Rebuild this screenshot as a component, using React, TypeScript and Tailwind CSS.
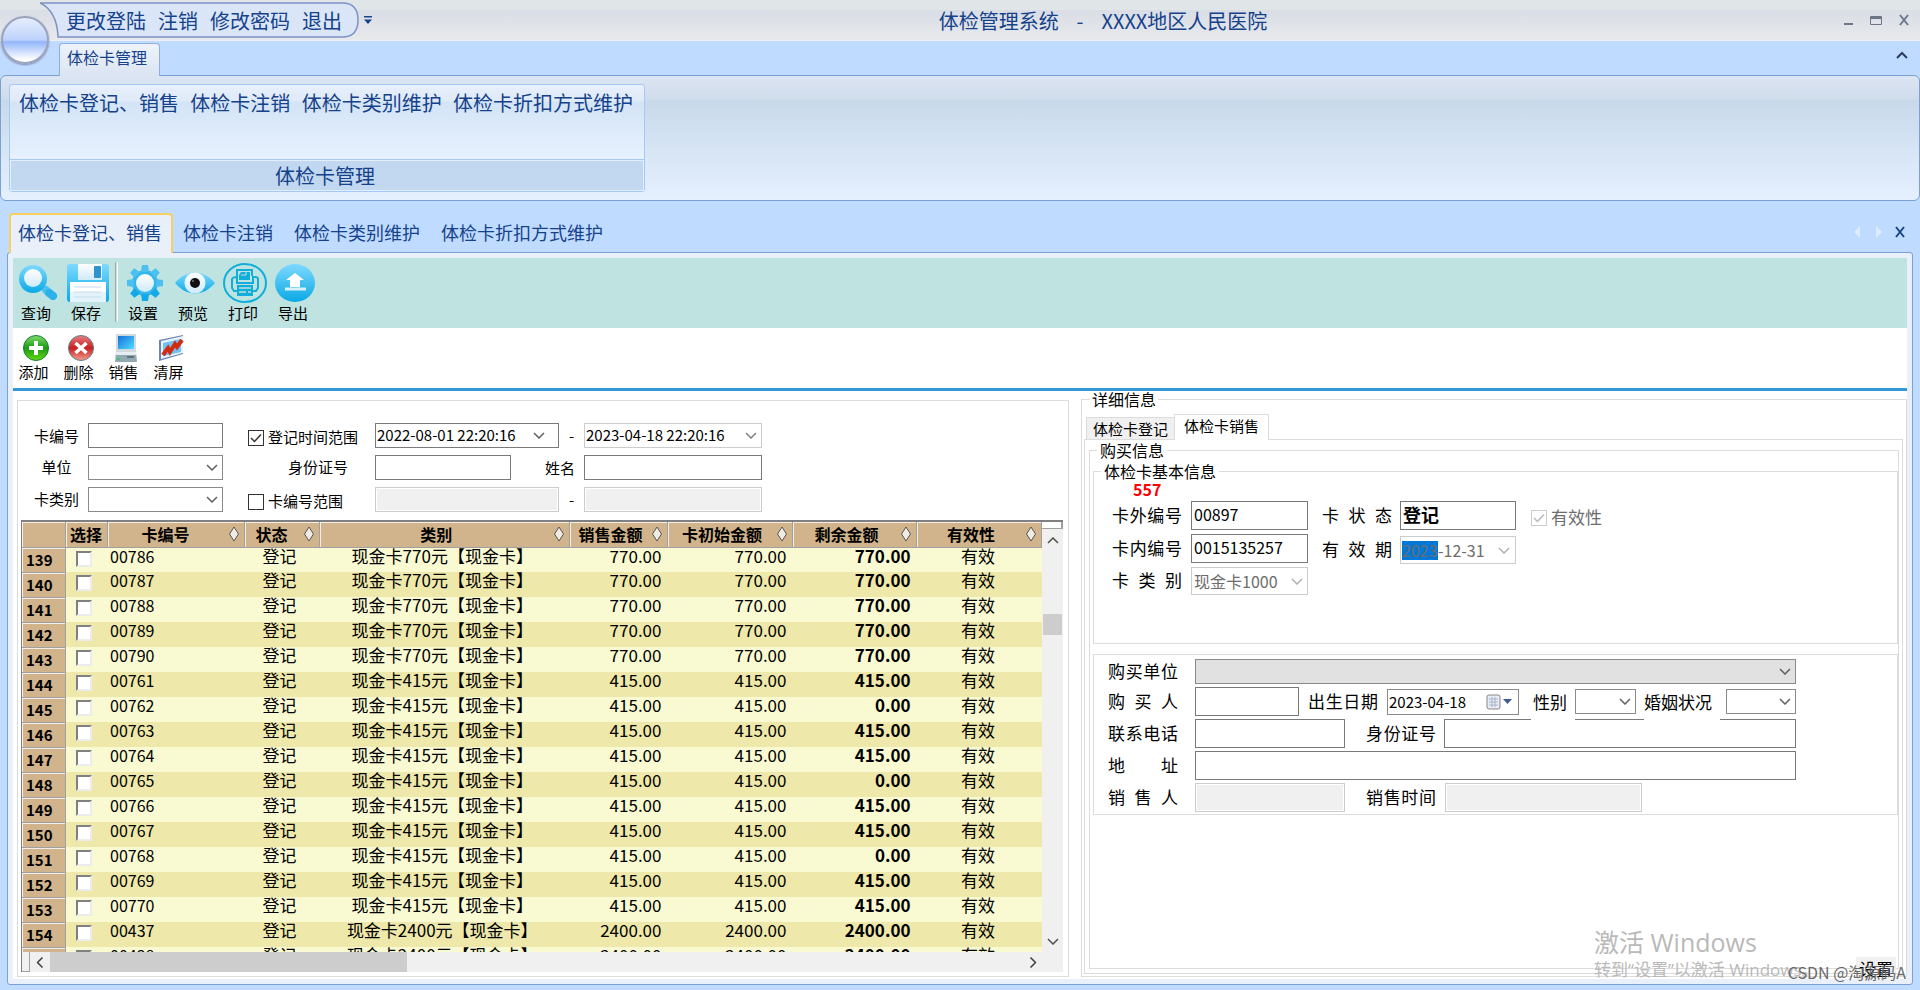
import type { ReactNode } from "react";
import clsx from "clsx";

const ribbonItems = ["体检卡登记、销售", "体检卡注销", "体检卡类别维护", "体检卡折扣方式维护"];
const quickItems = ["更改登陆", "注销", "修改密码", "退出"];

type Row = { no: number; card: string; kind: string; sale: string; left: string };

const k770 = "现金卡770元【现金卡】";
const k415 = "现金卡415元【现金卡】";
const k2400 = "现金卡2400元【现金卡】";

const rows: Row[] = [
  { no: 139, card: "00786", kind: k770, sale: "770.00", left: "770.00" },
  { no: 140, card: "00787", kind: k770, sale: "770.00", left: "770.00" },
  { no: 141, card: "00788", kind: k770, sale: "770.00", left: "770.00" },
  { no: 142, card: "00789", kind: k770, sale: "770.00", left: "770.00" },
  { no: 143, card: "00790", kind: k770, sale: "770.00", left: "770.00" },
  { no: 144, card: "00761", kind: k415, sale: "415.00", left: "415.00" },
  { no: 145, card: "00762", kind: k415, sale: "415.00", left: "0.00" },
  { no: 146, card: "00763", kind: k415, sale: "415.00", left: "415.00" },
  { no: 147, card: "00764", kind: k415, sale: "415.00", left: "415.00" },
  { no: 148, card: "00765", kind: k415, sale: "415.00", left: "0.00" },
  { no: 149, card: "00766", kind: k415, sale: "415.00", left: "415.00" },
  { no: 150, card: "00767", kind: k415, sale: "415.00", left: "415.00" },
  { no: 151, card: "00768", kind: k415, sale: "415.00", left: "0.00" },
  { no: 152, card: "00769", kind: k415, sale: "415.00", left: "415.00" },
  { no: 153, card: "00770", kind: k415, sale: "415.00", left: "415.00" },
  { no: 154, card: "00437", kind: k2400, sale: "2400.00", left: "2400.00" },
  { no: 155, card: "00438", kind: k2400, sale: "2400.00", left: "2400.00" },
];

const columns = [
  { title: "", width: "w-[43px]", sort: false },
  { title: "选择", width: "w-[42px]", sort: false },
  { title: "卡编号", width: "w-[137px]", sort: true },
  { title: "状态", width: "w-[75px]", sort: true },
  { title: "类别", width: "", sort: true },
  { title: "销售金额", width: "w-[98px]", sort: true },
  { title: "卡初始金额", width: "w-[125px]", sort: true },
  { title: "剩余金额", width: "w-[124px]", sort: true },
  { title: "有效性", width: "w-[125px]", sort: true },
];

function Chevron({ className = "text-[#606060]", flip = false }: { className?: string; flip?: boolean }) {
  return (
    <svg
      viewBox="0 0 12 7"
      className={clsx("pointer-events-none h-[7px] w-3", flip && "rotate-180", className)}
      fill="none"
      stroke="currentColor"
      strokeWidth="1.5"
      aria-hidden
    >
      <path d="M1 1l5 5 5-5" />
    </svg>
  );
}

function SelectBox({
  label,
  className,
  value = "",
  disabled = false,
}: {
  label: string;
  className?: string;
  value?: string;
  disabled?: boolean;
}) {
  return (
    <div
      className={clsx(
        "relative flex items-center border px-[2px]",
        disabled ? "border-[#cccccc] text-[#6d6d6d]" : "border-[#8a8a8a]",
        className
      )}
    >
      <select
        aria-label={label}
        disabled={disabled}
        className="h-full w-full appearance-none bg-transparent pr-5 text-base leading-5 opacity-100"
      >
        <option>{value}</option>
      </select>
      <Chevron className={clsx("absolute right-1", disabled ? "text-[#b0b0b0]" : "text-[#606060]")} />
    </div>
  );
}

function TextBox({
  label,
  className,
  value = "",
  disabled = false,
}: {
  label: string;
  className?: string;
  value?: string;
  disabled?: boolean;
}) {
  return (
    <input
      type="text"
      aria-label={label}
      defaultValue={value}
      disabled={disabled}
      className={clsx(
        "border px-[2px] pb-1 text-base leading-5",
        disabled ? "border-[#cccccc] bg-[#f0f0f0] shadow-[inset_0_0_0_1px_#fff]" : "border-[#7a7a7a] bg-white",
        className
      )}
    />
  );
}

function CheckBox({ id, checked = false, disabled = false }: { id: string; checked?: boolean; disabled?: boolean }) {
  return (
    <span className="relative flex h-4 w-4 shrink-0">
      <input
        id={id}
        type="checkbox"
        defaultChecked={checked}
        disabled={disabled}
        className={clsx("peer h-4 w-4 appearance-none border bg-white", disabled ? "border-[#cccccc]" : "border-[#333333]")}
      />
      <svg
        viewBox="0 0 16 16"
        className={clsx(
          "pointer-events-none absolute inset-0 hidden h-4 w-4 peer-checked:block",
          disabled ? "text-[#b8b8b8]" : "text-[#333333]"
        )}
        fill="none"
        stroke="currentColor"
        strokeWidth="1.5"
        aria-hidden
      >
        <path d="M3 8l3.5 3.5L13 4.5" />
      </svg>
    </span>
  );
}

/* field captions all span the same width, as in the desktop form */
function Caption({ children, className }: { children: ReactNode; className?: string }) {
  return (
    <span
      className={clsx(
        "w-[70px] shrink-0 pb-[2px] text-[17px] leading-5 whitespace-nowrap [text-align-last:justify]",
        className
      )}
    >
      {children}
    </span>
  );
}

function SearchIcon() {
  return (
    <svg viewBox="0 0 40 38" className="h-[38px] w-10" aria-hidden>
      <defs>
        <linearGradient id="blueV" x1="0" y1="0" x2="0" y2="1">
          <stop offset="0" stopColor="#7fd9ff" />
          <stop offset="1" stopColor="#0aa9e6" />
        </linearGradient>
        <linearGradient id="paleV" x1="0" y1="0" x2="0" y2="1">
          <stop offset="0" stopColor="#ffffff" />
          <stop offset="1" stopColor="#cfeafa" />
        </linearGradient>
      </defs>
      <path d="M28 26l7 6" stroke="#4fc0f2" strokeWidth="8" strokeLinecap="round" />
      <path d="M31 29l4 3" stroke="#18a8e8" strokeWidth="8" strokeLinecap="round" opacity=".6" />
      <circle cx="15" cy="15" r="14" fill="url(#blueV)" />
      <circle cx="15" cy="14" r="9" fill="url(#paleV)" />
    </svg>
  );
}

function SaveIcon() {
  return (
    <svg viewBox="0 0 42 38" className="h-[38px] w-[42px]" aria-hidden>
      <rect x="0" y="0" width="42" height="38" rx="3" fill="url(#blueV)" />
      <rect x="11" y="0" width="24" height="16" fill="url(#paleV)" />
      <rect x="27" y="2" width="7" height="12" rx="1" fill="#2f93cc" />
      <path d="M3 18h36v20H3z" fill="#fff" />
      <path d="M3 28h36v10H3z" fill="#e4f2fb" />
      <path d="M7 23h27M7 28h27M7 33h27" stroke="#c3dcec" />
    </svg>
  );
}

function GearIcon() {
  return (
    <svg viewBox="-20 -19 40 38" className="h-[38px] w-10" aria-hidden>
      <circle r="13" fill="#35b7ec" />
      {[0, 45, 90, 135, 180, 225, 270, 315].map((a) => (
        <path key={a} d="M-3 -18h6l1 7h-8z" transform={`rotate(${a})`} fill={a > 90 && a < 270 ? "#12a9e6" : "#4cc0f0"} />
      ))}
      <circle r="9" fill="url(#paleV)" />
    </svg>
  );
}

function EyeIcon() {
  return (
    <svg viewBox="0 0 40 38" className="h-[38px] w-10" aria-hidden>
      <path d="M0 19C12 5 28 5 40 19C28 33 12 33 0 19z" fill="url(#blueV)" />
      <circle cx="20" cy="19" r="10.5" fill="url(#paleV)" />
      <circle cx="20" cy="19" r="5" fill="#111" />
      <circle cx="18" cy="17" r="1" fill="#777" />
    </svg>
  );
}

function PrintIcon() {
  return (
    <svg viewBox="0 0 44 40" className="h-10 w-11" fill="none" stroke="#12aedb" strokeWidth="2" aria-hidden>
      <ellipse cx="22" cy="20" rx="21" ry="19" />
      <path d="M14 13V7h15v6" />
      <path d="M18 9h9v8H16v-5z" fill="#12aedb" stroke="none" />
      <path d="M18 12h5V9" stroke="#bfe1df" strokeWidth="1" />
      <path d="M14 28h-3l-2-3v-9q1-2 4-2h1v6h16v-6h2q3 0 3 2v9l-2 3h-3" />
      <path d="M14 22h16v11H14z" fill="#12aedb" stroke="none" />
      <path d="M16 25h12M16 29h7M25 29h3" stroke="#bfe1df" strokeWidth="1.5" />
    </svg>
  );
}

function ExportIcon() {
  return (
    <svg viewBox="0 0 40 38" className="h-[38px] w-10" aria-hidden>
      <ellipse cx="20" cy="19" rx="20" ry="19" fill="url(#blueV)" />
      <path d="M20 9l9 7h-4v7H15v-7h-4z" fill="#fff" />
      <path d="M10 25h21" stroke="#d9f1fc" strokeWidth="3" />
    </svg>
  );
}

function AddIcon() {
  return (
    <svg viewBox="0 0 28 28" className="h-7 w-7" aria-hidden>
      <defs>
        <linearGradient id="green" x1="0" y1="0" x2="0" y2="1">
          <stop offset="0" stopColor="#7fdc6c" />
          <stop offset=".5" stopColor="#1c9a14" />
          <stop offset="1" stopColor="#5fdc10" />
        </linearGradient>
      </defs>
      <circle cx="14" cy="14" r="12.5" fill="url(#green)" stroke="#1d7a3c" />
      <path d="M14 7v14M7 14h14" stroke="#fff" strokeWidth="4" />
    </svg>
  );
}

function DeleteIcon() {
  return (
    <svg viewBox="0 0 28 28" className="h-7 w-7" aria-hidden>
      <defs>
        <linearGradient id="red" x1="0" y1="0" x2="0" y2="1">
          <stop offset="0" stopColor="#e98080" />
          <stop offset=".5" stopColor="#c81e22" />
          <stop offset="1" stopColor="#f5a08f" />
        </linearGradient>
      </defs>
      <circle cx="14" cy="14" r="12.5" fill="url(#red)" stroke="#5f7f8c" />
      <path d="M8.5 9l11 10M19.5 9l-11 10" stroke="#fff" strokeWidth="3.5" />
    </svg>
  );
}

function ComputerIcon() {
  return (
    <svg viewBox="0 0 28 28" className="h-7 w-7" aria-hidden>
      <defs>
        <linearGradient id="screen" x1="0" y1="0" x2="1" y2="1">
          <stop offset="0" stopColor="#1670d8" />
          <stop offset="1" stopColor="#4fdcff" />
        </linearGradient>
      </defs>
      <path d="M4 0h20v18H4z" fill="#cfdbe0" />
      <path d="M6 2h16v13H6z" fill="url(#screen)" />
      <path d="M4 18h20l1 10H3z" fill="#93a9b2" />
      <path d="M4 18h20v3H4z" fill="#e6eef1" />
      <path d="M15 23h7" stroke="#4c6470" strokeWidth="1.5" />
      <path d="M5 25h3" stroke="#3fbf6a" strokeWidth="1.5" />
    </svg>
  );
}

function ChartIcon() {
  return (
    <svg viewBox="0 0 28 28" className="h-7 w-7" aria-hidden>
      <path d="M2 6l24-5v19L2 27z" fill="#6d86b0" />
      <path d="M4 7l22-5v17L4 25z" fill="#e4f2fd" />
      <path d="M6 9l18-4v13L6 22z" fill="#6fc2f3" />
      <path d="M6 21l5-7 2 4 5-8 2 3 5-7" fill="none" stroke="#d42a10" strokeWidth="4" />
    </svg>
  );
}

const bigTools = [
  { title: "设置", icon: <GearIcon /> },
  { title: "预览", icon: <EyeIcon /> },
  { title: "打印", icon: <PrintIcon /> },
  { title: "导出", icon: <ExportIcon /> },
];

const smallTools = [
  { title: "添加", icon: <AddIcon /> },
  { title: "删除", icon: <DeleteIcon /> },
  { title: "销售", icon: <ComputerIcon /> },
  { title: "清屏", icon: <ChartIcon /> },
];

function BigTool({ title, icon }: { title: string; icon: ReactNode }) {
  return (
    <button type="button" className="flex w-[50px] flex-col items-center text-[15px] leading-5">
      <span className="flex h-[41px] items-center">{icon}</span>
      <span className="pr-1">{title}</span>
    </button>
  );
}

function TitleBar() {
  return (
    <header className="relative flex h-[41px] items-center border-b border-[#eef1f4] bg-[linear-gradient(#e0e6e8_10px,#d9dde5_10px,#e7e9ec)]">
      <nav className="relative ml-10 flex h-9 w-[320px] items-center gap-3 pt-[2px] pl-[26px] text-xl leading-6">
        <svg viewBox="0 0 320 36" className="absolute inset-0 h-9 w-[320px]" aria-hidden>
          <path
            d="M0 1H304Q318 2 318 18Q318 34 304 35H18Q17 9 0 1z"
            fill="#dae6f8"
            stroke="#7d93c4"
            strokeWidth="1.5"
          />
        </svg>
        {quickItems.map((item) => (
          <button key={item} type="button" className="relative shrink-0">
            {item}
          </button>
        ))}
      </nav>
      <button type="button" aria-label="自定义" className="ml-1">
        <svg viewBox="0 0 8 8" className="h-2 w-2" fill="#15428b" aria-hidden>
          <path d="M0 0h8v1.5H0zM0 3.5h8L4 8z" />
        </svg>
      </button>
      <h1 className="flex-1 pt-[2px] pr-2 text-center text-xl leading-6 whitespace-pre">
        {"体检管理系统    -    XXXX地区人民医院"}
      </h1>
      <div className="mr-[10px] flex items-center gap-4 text-[#6c7686]">
        <button type="button" aria-label="最小化">
          <svg viewBox="0 0 12 12" className="h-3 w-3" fill="currentColor" aria-hidden>
            <path d="M2 9h9v2H2z" />
          </svg>
        </button>
        <button type="button" aria-label="最大化">
          <svg viewBox="0 0 12 12" className="h-3 w-3" fill="none" stroke="currentColor" aria-hidden>
            <path d="M.5 2.5h11v8H.5zM.5 3.5h11M.5 4.5h11" />
          </svg>
        </button>
        <button type="button" aria-label="关闭">
          <svg viewBox="0 0 12 12" className="h-3 w-3" fill="none" stroke="currentColor" strokeWidth="2" aria-hidden>
            <path d="M2 1l8 10M10 1L2 11" />
          </svg>
        </button>
      </div>
      <button
        type="button"
        aria-label="主菜单"
        className="absolute top-4 left-px z-10 h-12 w-12 rounded-full border-2 border-[#9aa3bd] bg-[linear-gradient(#e6eefd,#bdd2fc_50%,#93b6f9_54%,#ffffff_95%)] shadow-[0_1px_2px_#7d88a8]"
      />
    </header>
  );
}

function Ribbon() {
  return (
    <>
      <div className="flex h-[34px] items-end justify-between pr-3 pl-[59px]">
        <button
          type="button"
          className="relative -mb-px h-[33px] rounded-t border border-b-0 border-[#8fb0de] bg-linear-to-b from-[#eef3fb] to-[#dbe4f2] pr-3 pb-[6px] pl-[7px] text-base leading-5"
        >
          体检卡管理
        </button>
        <button type="button" aria-label="收起功能区" className="mb-4">
          <svg viewBox="0 0 12 8" className="h-2 w-3" fill="none" stroke="#2b3d5c" strokeWidth="2" aria-hidden>
            <path d="M1 7l5-5 5 5" />
          </svg>
        </button>
      </div>
      <section className="h-[126px] rounded-md border border-[#7ba0d8] bg-[linear-gradient(#dbe5f3,#d1dcec_23px,#c8d9ea_24px,#e5f0ff)] p-2">
        <div className="flex h-[108px] w-[636px] flex-col rounded-[3px] border border-[#a5c8f5] bg-[linear-gradient(#e7f0fb,#dfeaf8_16px,#d3e4f6_17px,#e7f1ff_74px)]">
          <div className="flex flex-1 justify-between pt-[6px] pr-[11px] pl-[9px]">
            {ribbonItems.map((item) => (
              <button key={item} type="button" className="self-start text-xl leading-6">
                {item}
              </button>
            ))}
          </div>
          <div className="flex h-8 items-center justify-center border-t border-[#a5c8f5] bg-[#c2d8f0] pr-1 text-xl leading-6 shadow-[inset_0_0_0_1px_#e3eefb]">
            体检卡管理
          </div>
        </div>
      </section>
    </>
  );
}

function DocumentTabs() {
  return (
    <div className="flex h-[51px] items-end pr-[14px] pl-[9px] text-[18px] leading-6">
      <button
        type="button"
        className="relative z-10 -mb-px h-10 rounded-t border-2 border-b-0 border-[#f5d25f] bg-linear-to-b from-[#e9eff9] to-[#e9f0fa] pr-[9px] pb-1 pl-[7px]"
      >
        {ribbonItems[0]}
      </button>
      <div className="flex h-10 flex-1 items-center gap-[21px] pl-[10px]">
        {ribbonItems.slice(1).map((item) => (
          <button key={item} type="button">
            {item}
          </button>
        ))}
      </div>
      <div className="flex h-10 items-center gap-3">
        <svg viewBox="0 0 28 12" className="h-3 w-7" fill="#dfecff" aria-hidden>
          <path d="M6 0v12L0 6zM22 0v12l6-6z" />
        </svg>
        <button type="button" aria-label="关闭页签">
          <svg viewBox="0 0 12 12" className="h-3 w-3" fill="none" stroke="#15428b" strokeWidth="2" aria-hidden>
            <path d="M2 1l8 10M10 1L2 11" />
          </svg>
        </button>
      </div>
    </div>
  );
}

function Filters() {
  return (
    <form className="grid auto-rows-[25px] grid-cols-[54px_135px_152px_209px_178px] gap-y-[7px] pt-[22px] pl-4 text-[15px] leading-5">
      <span className="w-[45px] self-center text-center">卡编号</span>
      <TextBox label="卡编号" className="w-full" />
      <div className="flex items-center gap-1 pt-1 pl-[25px]">
        <CheckBox id="date-range" checked />
        <label htmlFor="date-range" className="pb-[2px]">登记时间范围</label>
      </div>
      <div className="flex items-center">
        <div className="flex h-full w-[184px] items-center border border-[#7a7a7a] pl-px">
          <input
            aria-label="开始时间"
            defaultValue="2022-08-01 22:20:16"
            className="w-[140px] min-w-0 bg-white pb-[2px] text-[15px] leading-5"
          />
          <Chevron className="ml-4 text-[#606060]" />
        </div>
        <span className="w-[25px] text-center">-</span>
      </div>
      <div className="flex items-center border border-[#cccccc] pl-px">
        <input
          aria-label="结束时间"
          defaultValue="2023-04-18 22:20:16"
          className="w-[150px] min-w-0 bg-white pb-[2px] text-[15px] leading-5"
        />
        <Chevron className="ml-[9px] text-[#808080]" />
      </div>

      <span className="w-[45px] self-center pb-[2px] text-center">单位</span>
      <SelectBox label="单位" />
      <span className="self-center pb-[2px] pl-[65px]">身份证号</span>
      <div className="flex items-center justify-between pr-[9px]">
        <TextBox label="身份证号" className="h-full w-[136px]" />
        <span>姓名</span>
      </div>
      <TextBox label="姓名" className="w-full" />

      <span className="w-[45px] self-center pb-[2px] text-center">卡类别</span>
      <SelectBox label="卡类别" />
      <div className="flex items-center gap-1 pt-1 pl-[25px]">
        <CheckBox id="card-range" />
        <label htmlFor="card-range" className="pb-[2px]">卡编号范围</label>
      </div>
      <div className="flex items-center">
        <TextBox label="起始卡编号" disabled className="h-full w-[184px]" />
        <span className="w-[25px] text-center">-</span>
      </div>
      <TextBox label="结束卡编号" disabled className="w-full" />
    </form>
  );
}

function CardTable() {
  return (
    <div className="mt-2 mr-[5px] mb-1 ml-[3px] flex min-h-0 flex-1 flex-col border-t-2 border-l border-[#808080]">
      <div className="flex min-h-0 flex-1">
        <div className="min-w-0 flex-1 overflow-hidden">
          <table className="w-full table-fixed border-collapse">
            <thead>
              <tr className="h-[25px] bg-[#d2b48c] text-base leading-5 font-bold">
                {columns.map((col, i) => (
                  <th
                    key={i}
                    scope="col"
                    className={clsx(
                      "border-r border-b border-[#a0a0a0] p-0 shadow-[inset_1px_1px_0_#f4eee6]",
                      col.width
                    )}
                  >
                    <div className="flex items-center">
                      <span className={clsx("flex-1 text-center whitespace-nowrap", i > 1 && i < 4 && "pr-1")}>
                        {col.title}
                      </span>
                      {col.sort && (
                        <svg viewBox="0 0 12 16" className="mr-1 h-4 w-3" fill="#f0ece4" stroke="#555" aria-hidden>
                          <path d="M6 1l4.500 7L6 15 1.500 8z" />
                        </svg>
                      )}
                    </div>
                  </th>
                ))}
              </tr>
            </thead>
            <tbody>
              {rows.map((row) => (
                <tr
                  key={row.no}
                  className="h-[25px] text-[17px] leading-4 whitespace-nowrap odd:bg-[#fafad2] even:bg-[#eee8aa]"
                >
                  <th
                    scope="row"
                    className="border-r border-b border-[#a0a0a0] bg-[#d2b48c] p-0 pr-2 text-[15px] leading-6 font-bold shadow-[inset_1px_1px_0_#f4eee6]"
                  >
                    {row.no}
                  </th>
                  <td className="p-0 pl-[10px] align-top">
                    <input
                      type="checkbox"
                      aria-label={`选择 ${row.card}`}
                      className="mt-[3px] block h-4 w-4 appearance-none border-2 border-t-[#808080] border-r-[#ececec] border-b-[#ececec] border-l-[#808080] bg-white"
                    />
                  </td>
                  <td className="p-0 pl-[3px] align-top text-base leading-4">{row.card}</td>
                  <td className="p-0 pr-1 text-center align-top">登记</td>
                  <td className="p-0 pr-1 text-center align-top">{row.kind}</td>
                  <td className="p-0 pr-[6px] text-right align-top">{row.sale}</td>
                  <td className="p-0 pr-[6px] text-right align-top">{row.sale}</td>
                  <td className="p-0 pr-[6px] text-right align-top font-bold">{row.left}</td>
                  <td className="p-0 pr-[2px] text-center align-top">有效</td>
                </tr>
              ))}
            </tbody>
          </table>
        </div>
        <div className="flex w-[21px] flex-col items-center bg-[#f0f0f0]">
          <div className="h-[7px] w-full border-r-2 border-b border-[#a0a0a0] bg-white" />
          <Chevron flip className="mt-2 mb-[70px] text-[#505050]" />
          <div className="h-[21px] w-[19px] bg-[#cdcdcd]" />
          <Chevron className="mt-auto mb-[7px] text-[#505050]" />
        </div>
      </div>
      <div className="flex h-5 items-center bg-[#f0f0f0]">
        <div className="h-full w-2 border-r border-b border-[#a0a0a0]" />
        <Chevron className="mx-1 rotate-90 text-[#404040]" />
        <div className="h-full w-[357px] bg-[#cdcdcd]" />
        <Chevron className="mr-6 ml-auto -rotate-90 text-[#404040]" />
      </div>
    </div>
  );
}

function CardInfo() {
  return (
    <fieldset className="ml-[3px] h-[181px] min-w-0 border border-[#dcdcdc]">
      <legend className="ml-[7px] px-[3px] text-base leading-4">体检卡基本信息</legend>
      <p className="pb-[2px] pl-[39px] text-base leading-5 font-bold text-[#ff0000]">557</p>
      <div className="flex gap-[14px]">
        <div className="flex flex-col gap-1 pl-[18px]">
          <label className="flex items-center gap-[9px]">
            <Caption>卡外编号</Caption>
            <TextBox label="卡外编号" value="00897" className="h-[29px] w-[117px]" />
          </label>
          <label className="flex items-center gap-[9px]">
            <Caption>卡内编号</Caption>
            <TextBox label="卡内编号" value="0015135257" className="h-[29px] w-[117px]" />
          </label>
          <div className="flex items-center gap-[9px]">
            <Caption>卡 类 别</Caption>
            <SelectBox label="卡类别" value="现金卡1000" disabled className="h-7 w-[117px]" />
          </div>
        </div>
        <div className="flex flex-col gap-[6px]">
          <label className="flex items-center gap-2">
            <Caption>卡 状 态</Caption>
            <TextBox label="卡状态" value="登记" className="h-[29px] w-[116px] text-[18px] font-bold" />
          </label>
          <div className="flex items-center gap-2">
            <Caption>有 效 期</Caption>
            <div className="flex h-7 w-[116px] items-center border border-[#cccccc] pl-px text-[#6d6d6d]">
              <input
                aria-label="有效期年份"
                defaultValue="2023"
                disabled
                className="h-[19px] w-9 bg-[#0078d7] text-base leading-4"
              />
              <input
                aria-label="有效期月日"
                defaultValue="-12-31"
                disabled
                className="w-[60px] min-w-0 text-base leading-5"
              />
              <Chevron className="text-[#b0b0b0]" />
            </div>
          </div>
        </div>
        <div className="flex items-center gap-1 self-start pt-[6px] pl-px text-[17px] leading-5 text-[#6d6d6d]">
          <CheckBox id="valid" checked disabled />
          <label htmlFor="valid" className="pb-[2px]">有效性</label>
        </div>
      </div>
    </fieldset>
  );
}

function BuyerInfo() {
  return (
    <div className="mt-[10px] ml-[3px] flex h-[161px] flex-col gap-[3px] border border-[#dcdcdc] pt-1 pl-[14px]">
      <div className="flex h-[25px] items-center">
        <Caption className="mr-[17px]">购买单位</Caption>
        <SelectBox label="购买单位" className="h-full w-[601px] bg-[#e1e1e1]" />
      </div>
      <div className="flex h-[29px] items-center">
        <Caption className="mr-[17px]">购 买 人</Caption>
        <TextBox label="购买人" className="h-full w-[104px]" />
        <Caption className="mx-[9px]">出生日期</Caption>
        <div className="flex h-[26px] w-[132px] items-center border border-[#8a8a8a] pl-px">
          <input
            aria-label="出生日期"
            defaultValue="2023-04-18"
            className="w-[97px] min-w-0 text-[15px] leading-5"
          />
          <button type="button" aria-label="打开日历">
            <svg viewBox="0 0 26 16" className="h-4 w-[26px]" aria-hidden>
              <rect x="1" y="1" width="13" height="14" rx="2" fill="#e8ecf4" stroke="#8d8288" />
              <path d="M3 5h9M3 8h9M3 11h9M6 3v10M9 3v10" stroke="#a9b6cc" />
              <path d="M17 5h9l-4.500 5z" fill="#3c5a96" />
            </svg>
          </button>
        </div>
        {/* these captions sit over the top edge of the ID field below */}
        <span className="relative z-10 -mb-3 ml-3 bg-white pr-2 pb-3 pl-[2px] text-[17px] leading-5 whitespace-nowrap">
          性别
        </span>
        <SelectBox label="性别" className="h-[25px] w-[61px]" />
        <span className="relative z-10 -mb-3 ml-2 bg-white pr-2 pb-3 text-[17px] leading-5 whitespace-nowrap">
          婚姻状况
        </span>
        <SelectBox label="婚姻状况" className="ml-[6px] h-[25px] w-[70px]" />
      </div>
      <div className="flex h-[29px] items-center">
        <Caption className="mr-[17px]">联系电话</Caption>
        <TextBox label="联系电话" className="h-full w-[150px]" />
        <Caption className="mr-2 ml-[21px]">身份证号</Caption>
        <TextBox label="身份证号" className="h-full w-[352px]" />
      </div>
      <div className="flex h-[29px] items-center">
        <Caption className="mr-[17px]">地 址</Caption>
        <TextBox label="地址" className="h-full w-[601px]" />
      </div>
      <div className="flex h-[29px] items-center">
        <Caption className="mr-[17px]">销 售 人</Caption>
        <TextBox label="销售人" disabled className="h-full w-[150px]" />
        <Caption className="mr-[9px] ml-[21px]">销售时间</Caption>
        <TextBox label="销售时间" disabled className="h-full w-[197px]" />
      </div>
    </div>
  );
}

function Details() {
  return (
    <fieldset className="relative flex min-w-0 flex-col border border-[#dcdcdc] pr-[3px] pb-[2px] pl-[2px]">
      <legend className="ml-[6px] px-[2px] text-base leading-4">详细信息</legend>
      <div className="mt-[7px] flex items-end pl-[2px] text-[15px] leading-5">
        <button type="button" className="h-[22px] border border-b-0 border-[#dcdcdc] bg-[#f0f0f0] px-[6px]">
          体检卡登记
        </button>
        <button
          type="button"
          className="relative z-10 -mb-px -ml-px h-[26px] border border-b-0 border-[#dcdcdc] bg-white px-[9px] pb-1"
        >
          体检卡销售
        </button>
      </div>
      <div className="flex flex-1 flex-col border border-[#dcdcdc] pt-[2px] pr-[3px] pb-1 pl-1">
        <fieldset className="min-w-0 flex-1 border border-[#dcdcdc]">
          <legend className="ml-[7px] px-[3px] text-base leading-4">购买信息</legend>
          <div className="pt-[5px]">
            <CardInfo />
            <BuyerInfo />
          </div>
        </fieldset>
      </div>
      <button
        type="button"
        className="absolute right-[10px] -bottom-1 h-[23px] bg-[#f0f0f0] px-[3px] text-[17px] leading-5"
      >
        设置
      </button>
    </fieldset>
  );
}

export default function App() {
  return (
    <div className="relative flex h-screen flex-col overflow-hidden bg-[#bfdbff] pb-[5px] font-['Noto_Sans_CJK_SC',sans-serif] text-[#15428b]">
      <TitleBar />
      <Ribbon />
      <DocumentTabs />
      <main className="mr-[7px] ml-[7px] flex min-h-0 flex-1 flex-col rounded-[3px] border border-[#7ba0d8] bg-[#e9f0fa] p-[5px] text-black">
        <div className="flex h-[70px] bg-[#bfe3e0] pt-1">
          <div className="flex">
            <BigTool title="查询" icon={<SearchIcon />} />
            <BigTool title="保存" icon={<SaveIcon />} />
          </div>
          <div className="mx-[2px] h-[60px] w-[3px] border-r border-l border-r-white border-l-[#a0a8a8]" />
          <div className="flex">
            {bigTools.map((tool) => (
              <BigTool key={tool.title} title={tool.title} icon={tool.icon} />
            ))}
          </div>
        </div>
        <div className="flex h-[63px] border-b-[3px] border-[#3199d8] bg-white pt-[6px]">
          {smallTools.map((tool) => (
            <button
              key={tool.title}
              type="button"
              className="flex w-[45px] flex-col items-center text-[15px] leading-5"
            >
              {tool.icon}
              <span className="pr-1">{tool.title}</span>
            </button>
          ))}
        </div>
        <div className="grid min-h-0 flex-1 grid-cols-[minmax(0,1052fr)_minmax(0,826fr)] gap-3 bg-white pb-[2px] pl-1">
          <section className="mt-[9px] flex min-h-0 flex-col border border-[#dcdcdc]">
            <Filters />
            <CardTable />
          </section>
          <Details />
        </div>
      </main>

      <div className="pointer-events-none absolute right-0 bottom-2 z-20 w-[326px] font-['Open_Sans','Noto_Sans_CJK_SC',sans-serif] text-[#b9b9b9]">
        <p className="text-[25px] leading-8">激活 Windows</p>
        <p className="text-[17px] leading-6">转到“设置”以激活 Windows。</p>
      </div>
      <span className="pointer-events-none absolute right-[14px] bottom-2 z-20 text-base leading-5 text-[#6a6a6a]">
        CSDN @淘源码A
      </span>
    </div>
  );
}
